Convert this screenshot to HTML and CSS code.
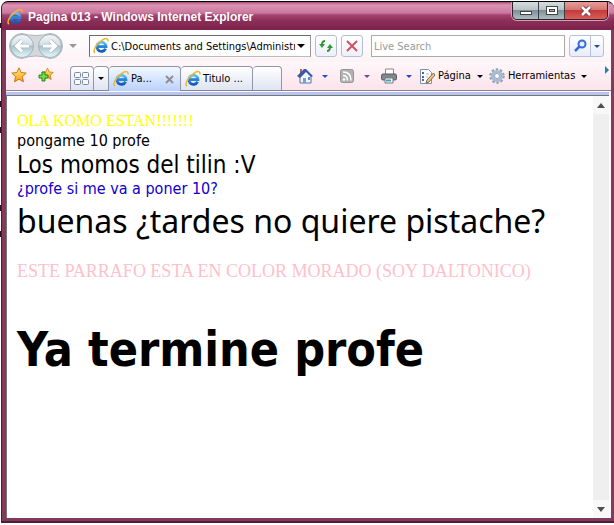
FILE: index.html
```html
<!DOCTYPE html>
<html lang="es">
<head>
<meta charset="utf-8">
<title>Pagina 013 - Windows Internet Explorer</title>
<link rel="stylesheet" href="styles.css">
</head>
<body>
<svg class="defs" aria-hidden="true">
  <defs>
    <linearGradient id="blue" x1="0" y1="0" x2="0" y2="1"><stop offset="0" stop-color="#5cc3f5"/><stop offset="1" stop-color="#1258c0"/></linearGradient>
    <linearGradient id="glass" x1="0" y1="0" x2="0" y2="1"><stop offset="0" stop-color="#f4f7f9"/><stop offset=".45" stop-color="#d5e0e6"/><stop offset=".5" stop-color="#a9bfcb"/><stop offset="1" stop-color="#e4fafd"/></linearGradient>
    <linearGradient id="gold" x1="0" y1="0" x2="0" y2="1"><stop offset="0" stop-color="#fff27a"/><stop offset="1" stop-color="#f79a1c"/></linearGradient>
    <symbol id="ie" viewBox="0 0 16 16">
      <path d="M12.6 10.6A4.6 4.6 0 1 1 13 8.6H5" fill="none" stroke="url(#blue)" stroke-width="2.8"/>
      <path d="M3.6 8.6h10" stroke="#2484dc" stroke-width="2"/>
      <path d="M2 15C-.8 13.400 3 6 8.500 2.600 12-.2 15.500-.2 15 3.500" fill="none" stroke="#f0b52c" stroke-width="1.500"/>
    </symbol>
    <symbol id="star" viewBox="0 0 16 16"><path d="M8 .8l2.100 4.700 5.100.6-3.800 3.500 1 5.200L8 12.200l-4.500 2.600 1-5.200L.8 6.100l5.100-.6z" fill="url(#gold)" stroke="#c77a14"/></symbol>
  </defs>
</svg>
<div class="window">
  <header class="titlebar">
    <svg class="icon"><use href="#ie"/></svg>
    <span class="title">Pagina 013 - Windows Internet Explorer</span>
    <div class="controls">
      <button class="control" aria-label="Minimizar"><svg width="14" height="12"><rect x="1.500" y="6.500" width="11" height="3" fill="#fff" stroke="#444"/></svg></button>
      <button class="control" aria-label="Maximizar"><svg width="14" height="12"><rect x="1.500" y="1.500" width="11" height="8" fill="#fff" stroke="#444"/><rect x="4.500" y="4.500" width="5" height="2" fill="#a8b2b6" stroke="#444"/></svg></button>
      <button class="control close" aria-label="Cerrar"><svg width="14" height="12"><path d="M3 2l8 8M11 2l-8 8" stroke="#7a3a40" stroke-width="4.500"/><path d="M3 2l8 8M11 2l-8 8" stroke="#fff" stroke-width="2.500"/></svg></button>
    </div>
  </header>
  <div class="body">
    <nav class="navrow">
      <button class="history" aria-label="Atrás y adelante">
        <svg width="56" height="28" viewBox="0 0 56 28">
          <path d="M14 1.500q14 4 28 0a12.500 12.500 0 0 1 0 25q-14-5-28 0a12.500 12.500 0 0 1 0-25z" fill="#d4d8dc" stroke="#b2b5b8"/>
          <circle cx="14" cy="14" r="11.500" fill="url(#glass)" stroke="#a3b2bb"/>
          <circle cx="42" cy="14" r="11.500" fill="url(#glass)" stroke="#a3b2bb"/>
          <path d="M21 14H9M14 8.500L8.500 14l5.500 5.500M35 14h12M42 8.500l5.500 5.500-5.500 5.500" fill="none" stroke="#a9bbc5" stroke-width="4.500"/>
          <path d="M21 14H9M14 8.500L8.500 14l5.500 5.500M35 14h12M42 8.500l5.500 5.500-5.500 5.500" fill="none" stroke="#fff" stroke-width="3"/>
        </svg>
      </button>
      <button class="caret pale" aria-label="Páginas recientes"></button>
      <div class="address">
        <svg class="icon"><use href="#ie"/></svg>
        <input type="text" aria-label="Dirección" value="C:\Documents and Settings\Administrador">
        <button class="caret" aria-label="Direcciones"></button>
      </div>
      <button class="tool" aria-label="Actualizar"><svg width="16" height="16"><path d="M7 3C5 3 4 4 4 7M9 13c2 0 3-1 3-4" fill="none" stroke="#2e9b38" stroke-width="2"/><path d="M1 6h6l-3 4zM9 10h6l-3-4z" fill="#2e9b38"/></svg></button>
      <button class="tool" aria-label="Detener"><svg width="16" height="16"><path d="M3 3l10 10M13 3L3 13" stroke="#cf5362" stroke-width="2"/></svg></button>
      <input class="search" type="text" aria-label="Buscar" placeholder="Live Search">
      <div class="searchbtns">
        <button aria-label="Buscar"><svg width="14" height="14"><circle cx="9" cy="5" r="3.500" fill="#e4efff" stroke="#3668dc" stroke-width="2"/><path d="M6.500 7.500L2 12" stroke="#3668dc" stroke-width="2.500"/></svg></button>
        <button aria-label="Opciones de búsqueda"><span class="caret small navy"></span></button>
      </div>
    </nav>
    <div class="tabrow">
      <div class="favs">
        <button aria-label="Favoritos"><svg class="icon"><use href="#star"/></svg></button>
        <button aria-label="Agregar a favoritos"><svg class="icon" viewBox="0 0 16 16"><use href="#star" x="3" width="13" height="14"/><path d="M4 5h3v3h3v3H7v3H4v-3H1V8h3z" fill="#6fdc45" stroke="#26861c"/></svg></button>
      </div>
      <div class="tabs">
        <button class="tab quick" aria-label="Pestañas rápidas"><svg width="16" height="14"><g fill="#f7f9fc" stroke="#7a88a0"><rect x=".5" y=".5" width="6" height="5" rx="1"/><rect x="8.500" y=".5" width="6" height="5" rx="1"/><rect x=".5" y="7.500" width="6" height="5" rx="1"/><rect x="8.500" y="7.500" width="6" height="5" rx="1"/></g></svg></button>
        <button class="tab list" aria-label="Lista de pestañas"><span class="caret small"></span></button>
        <button class="tab page active"><svg class="icon"><use href="#ie"/></svg><span>Pa...</span><svg class="x" width="9" height="9"><path d="M1 1l7 7M8 1L1 8" stroke="#8c8f98" stroke-width="2"/></svg></button>
        <button class="tab page"><svg class="icon"><use href="#ie"/></svg><span>Titulo ...</span></button>
        <button class="tab new" aria-label="Nueva pestaña"></button>
      </div>
      <div class="commands">
        <button aria-label="Inicio"><svg class="icon" viewBox="0 0 16 16"><path d="M3 8v7h11V8L9 3z" fill="#f3f6ff" stroke="#5670a6"/><path d="M3 1h2v4H3z" fill="#b66b50"/><path d="M0 8l7-7h2l7 7-2 1-5-5-6 6z" fill="#3a57a8"/><path d="M6 10h3v5H6z" fill="#69a4dd"/><path d="M11 9h2v3h-2z" fill="#6b86bd"/></svg><span class="caret small blue"></span></button>
        <button aria-label="Fuentes"><svg class="icon" viewBox="0 0 16 16"><rect x="1.500" y="1.500" width="13" height="13" rx="2" fill="#b2b2b2" stroke="#969696"/><circle cx="5" cy="11.500" r="1.300" fill="#fff"/><path d="M4 7.500q4.500 0 4.500 5M4 4q8 0 8 8.500" fill="none" stroke="#fff" stroke-width="1.500"/></svg><span class="caret small plum"></span></button>
        <button aria-label="Imprimir"><svg class="icon" viewBox="0 0 16 16"><path d="M4.500 1h8v6h-8z" fill="#fff" stroke="#888"/><rect x=".5" y="6" width="15" height="6" rx="1.500" fill="#828589" stroke="#55585c"/><path d="M4 10h8v5H4z" fill="#fff" stroke="#777"/><path d="M5 12.500h5" stroke="#39a3c6" stroke-width="2"/></svg><span class="caret small blue"></span></button>
        <button class="wide"><svg class="icon" viewBox="0 0 16 16"><path d="M1.500 1.500h8l3 3v11h-11z" fill="#fcfcff" stroke="#8290a8"/><path d="M3 5h2M3 9h2M3 12h2" stroke="#4169b1" stroke-width="2"/><path d="M7 6h3M7 9h2" stroke="#b2b8c5"/><path d="M14.500 5L8 12l-1 3 3-1 6-7z" fill="#e9c87a" stroke="#80684a"/></svg><span>Página</span><span class="caret small"></span></button>
        <button class="wide"><svg class="icon" viewBox="0 0 16 16"><circle cx="8" cy="8" r="6.500" fill="none" stroke="#8fa3b8" stroke-width="2.500" stroke-dasharray="2.400 1.684"/><circle cx="8" cy="8" r="4.500" fill="#eef3f8" stroke="#a9bbce" stroke-width="3"/><circle cx="8" cy="8" r="2.500" fill="#fff" stroke="#8fa1b5"/></svg><span>Herramientas</span><span class="caret small"></span></button>
      </div>
      <button class="more" aria-label="Más"><svg width="5" height="8"><path d="M0 0l4 4-4 4z" fill="#277da5"/></svg></button>
    </div>
    <div class="viewport">
      <main class="page-content">
        <p class="hello">OLA KOMO ESTAN!!!!!!!</p>
        <p class="plain">pongame 10 profe</p>
        <p class="large">Los momos del tilin :V</p>
        <p class="plain question">¿profe si me va a poner 10?</p>
        <p class="comic">buenas ¿tardes no quiere pistache?</p>
        <p class="caps">ESTE PARRAFO ESTA EN COLOR MORADO (SOY DALTONICO)</p>
        <h1>Ya termine profe</h1>
      </main>
      <div class="scrollbar">
        <button aria-label="Subir"><svg width="8" height="5"><path d="M0 5l4-5 4 5z" fill="#505050"/></svg></button>
        <button aria-label="Bajar"><svg width="8" height="5"><path d="M0 0l4 5 4-5z" fill="#505050"/></svg></button>
      </div>
    </div>
  </div>
</div>
</body>
</html>
```
FILE: styles.css
```css
* { box-sizing: border-box; }
body {
  margin: 0;
  padding: 1px 0 2px 1px;
  height: 100vh;
  /* dark slivers of what lies behind the window, along its left edge */
  background:
    linear-gradient(#301020, #301020) 0 23px / 1px 5px no-repeat,
    linear-gradient(#301020, #301020) 0 101px / 1px 6px no-repeat,
    linear-gradient(#301020, #301020) 0 127px / 1px 6px no-repeat,
    linear-gradient(#301020, #301020) 0 205px / 1px 6px no-repeat,
    linear-gradient(#301020, #301020) 0 231px / 1px 6px no-repeat,
    #fff;
  font: 11px/16px Tahoma, "DejaVu Sans Condensed", sans-serif;
  color: #000;
}
.defs { position: absolute; width: 0; height: 0; }
button, input { font: inherit; color: inherit; border: 0; padding: 0; margin: 0; background: none; min-width: 0; }
button { display: flex; align-items: center; justify-content: center; }
svg { flex: none; display: block; }
.icon { width: 16px; height: 16px; }

.window {
  height: 100%;
  display: flex;
  flex-direction: column;
  background: #843a5c;
  border: 1px solid #4c1d35;
  border-top-color: #000;
  border-right: 0;
  border-bottom-width: 2px;
  border-radius: 7px 7px 0 0;
  overflow: hidden;
}
.titlebar {
  flex: none;
  height: 28px;
  display: flex;
  align-items: center;
  gap: 5px;
  padding: 2px 6px 0 5px;
  background: linear-gradient(#a64d77 0, #dc94b5 3px, #c9799d 11px, #a54470 13px, #8a2e58 19px, #7c2349 28px);
}
.title {
  flex: 1;
  font: bold 12px/16px Arial, "Liberation Sans", sans-serif;
  color: #fff;
}
.controls {
  align-self: flex-start;
  display: flex;
  height: 18px;
  margin-top: -2px;
  border: 1px solid #33212c;
  border-top: 0;
  border-radius: 0 0 5px 5px;
  box-shadow: 0 0 0 1px #d6a1b8;
  overflow: hidden;
}
.control {
  width: 26px;
  border-right: 1px solid #3e3e46;
  background: linear-gradient(#d5dcde, #b9c4c8 45%, #7f9098 50%, #a9bec2);
}
.control.close { width: 42px; border-right: 0; background: linear-gradient(#e69c98, #d77772 45%, #c13d3d 50%, #dc5d58); }

.body {
  flex: 1;
  min-height: 0;
  display: flex;
  flex-direction: column;
  margin: 0 3px 3px 4px;
  background: #fff7fa;
}
.navrow {
  flex: none;
  height: 32px;
  display: flex;
  align-items: center;
  padding: 0 7px 0 2px;
  background: linear-gradient(#fff, #fdf3f7);
}
.history { margin-right: 5px; }
.caret {
  width: 0;
  height: 0;
  flex: none;
  border: solid transparent;
  border-width: 4px 4px 0;
  border-top-color: #000;
}
.caret.small { border-width: 3px 3px 0; border-top-color: #000; }
.caret.pale { border-top-color: #98989c; }
.caret.navy { border-top-color: #24499b; }
.caret.blue { border-top-color: #2847d0; }
.caret.plum { border-top-color: #7b4a79; }
.address {
  flex: 221 1 0;
  min-width: 0;
  height: 22px;
  display: flex;
  align-items: center;
  gap: 2px;
  margin-left: 12px;
  padding: 0 5px 0 3px;
  border: 1px solid #6b6b70;
  border-right-color: #999;
  border-bottom-color: #bbb;
  background: #fff;
}
.address input { flex: 1; height: 18px; outline: 0; }
.tool {
  width: 22px;
  height: 22px;
  margin-left: 4px;
  border: 1px solid #b4bed3;
  border-radius: 3px;
  background: linear-gradient(#fff, #eef0fa);
}
.search {
  flex: 196 1 0;
  height: 22px;
  margin: 0 4px 0 8px;
  padding: 0 2px;
  border: 1px solid #aaa;
  background: #fff;
}
.search::placeholder { color: #999; opacity: 1; }
.searchbtns {
  display: flex;
  width: 35px;
  height: 22px;
  border: 1px solid #b8c0dc;
  border-radius: 3px;
  background: linear-gradient(#fff, #e8ecfc);
}
.searchbtns button { flex: 1; }
.searchbtns button:first-child { flex: 0 0 21px; border-right: 1px solid #b8c0dc; }

.tabrow {
  flex: none;
  height: 29px;
  display: flex;
  padding-top: 4px;
  background: linear-gradient(#fff7fa, #fbe3ec);
  border-bottom: 1px solid #8186a0;
}
.favs { display: flex; gap: 11px; padding: 1px 0 0 5px; align-items: flex-start; }
.tabs { display: flex; margin-left: 16px; }
.tab {
  height: 24px;
  border: 1px solid #9096a8;
  border-width: 1px 1px 0 0;
  border-radius: 4px 4px 0 0;
  background: linear-gradient(#fff, #dfe4f2);
}
.tab.quick { width: 24px; border-left-width: 1px; }
.tab.list { width: 15px; }
.tab.page { width: 72px; justify-content: flex-start; gap: 2px; padding-left: 4px; }
.tab.page.active { height: 25px; border-left-width: 0; background: linear-gradient(#f2f8ff, #b9d1fb); }
.tab .x { margin: 0 6px 0 auto; }
.tab.new { width: 29px; }
.commands { display: flex; height: 20px; margin-left: 15px; gap: 11px; }
.commands button { gap: 9px; }
.commands .wide { gap: 3px; }
.commands .wide .caret { margin-left: 3px; }
.commands .wide + .wide { margin-left: -5px; }
.commands button:nth-child(4) { margin-left: -4px; }
.more { align-self: flex-start; margin-left: auto; width: 8px; height: 8px; }

.viewport {
  flex: 1;
  min-height: 0;
  display: flex;
  margin-right: 2px;
  border-top: 1px solid #767676;
  border-left: 1px solid #777;
  background: #fff;
  box-shadow: 0 -3px #b9c5f1;
  margin-top: 4px;
}
.page-content { flex: 1; min-width: 0; padding: 15px 10px; overflow: hidden; white-space: nowrap; }
.page-content p { margin: 0; }
.hello { font: 16px/20px "Times New Roman", "Liberation Serif", serif; color: #ff0; }
.plain { font-size: 16px; line-height: 20px; }
.large { font-size: 24px; line-height: 28px; }
.question { color: #10c; }
.comic { font: 32px/44px "Comic Sans MS", "Noto Sans", sans-serif; }
.page-content .caps { margin-top: 18px; font: 18px/20px "Felix Titling", "Liberation Serif", serif; color: #ffc0cb; }
h1 { margin: 38px 0 0; font: bold 48px/60px Tahoma, "DejaVu Sans Condensed", sans-serif; }
.scrollbar {
  flex: none;
  width: 16px;
  display: flex;
  flex-direction: column;
  justify-content: space-between;
  background: #efefef;
}
.scrollbar button { height: 18px; background: #f8f8f8; }
```
